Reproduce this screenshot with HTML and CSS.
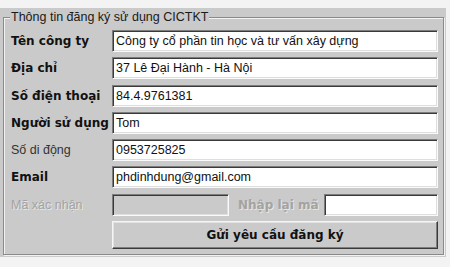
FILE: index.html
```html
<!DOCTYPE html>
<html lang="vi">
<head>
<meta charset="utf-8">
<title>Thông tin đăng ký sử dụng CICTKT</title>
<link rel="stylesheet" href="styles.css">
</head>
<body>
<div class="window">
  <div class="group">
    <div class="legend">Thông tin đăng ký sử dụng CICTKT</div>
    <div class="form">
      <div class="label bold">Tên công ty</div>
      <div class="field">Công ty cổ phần tin học và tư vấn xây dựng</div>

      <div class="label bold">Địa chỉ</div>
      <div class="field">37 Lê Đại Hành - Hà Nội</div>

      <div class="label bold">Số điện thoại</div>
      <div class="field">84.4.9761381</div>

      <div class="label bold">Người sử dụng</div>
      <div class="field">Tom</div>

      <div class="label normal">Số di động</div>
      <div class="field">0953725825</div>

      <div class="label bold">Email</div>
      <div class="field">phdinhdung@gmail.com</div>

      <div class="label disabled">Mã xác nhận</div>
      <div class="code-row">
        <div class="field field-disabled code-box"></div>
        <div class="label bold disabled retype">Nhập lại mã</div>
        <div class="field retype-box"></div>
      </div>

      <div></div>
      <div class="button">Gửi yêu cầu đăng ký</div>
    </div>
  </div>
</div>
</body>
</html>
```

FILE: styles.css
```css
html, body {
  margin: 0;
  padding: 0;
  background: #f3f3f3;
}

body {
  width: 450px;
  height: 267px;
  overflow: hidden;
  font-family: "Liberation Sans", Arial, sans-serif;
  font-size: 12.5px;
  color: #111;
}

.window {
  margin-top: 8px;
  width: 446px;
  height: 249px;
  background: #cacaca;
  padding-top: 9px;
  box-sizing: border-box;
}

.group {
  margin-left: 3px;
  width: 441px;
  height: 238px;
  box-sizing: border-box;
  border: 1px solid #8a8a8a;
  box-shadow: inset 1px 1px 0 #f2f2f2, 1px 1px 0 #f2f2f2;
  padding: 0 5px 0 7px;
}

.legend {
  margin-top: -8px;
  width: fit-content;
  padding: 0 1px;
  margin-left: -1px;
  background: #cacaca;
  line-height: 15px;
  color: #1a1a1a;
}

.form {
  margin-top: 5px;
  display: grid;
  grid-template-columns: 101px 326px;
  grid-template-rows: repeat(7, 22px) 28px;
  row-gap: 5.3px;
}

.label {
  display: flex;
  align-items: center;
  white-space: nowrap;
}

.bold {
  font-family: "DejaVu Sans", Verdana, sans-serif;
  font-weight: bold;
  font-size: 12px;
  color: #111;
}

.normal {
  color: #333;
}

.disabled {
  color: #a3a3a3;
  text-shadow: 1px 1px 0 #e6e6e6;
}

.field {
  box-sizing: border-box;
  height: 22px;
  background: #fff;
  border-top: 1px solid #7c7c7c;
  border-left: 1px solid #7c7c7c;
  border-right: 1px solid #fafafa;
  border-bottom: 1px solid #fafafa;
  box-shadow: inset 1px 1px 0 #3a3a3a, inset -1px -1px 0 #dedede;
  padding: 0 3px;
  display: flex;
  align-items: center;
  white-space: nowrap;
  overflow: hidden;
  color: #111;
}

.field-disabled {
  background: #cacaca;
}

.code-row {
  display: flex;
  align-items: center;
}

.code-box {
  width: 117px;
}

.retype {
  margin-left: 9px;
  width: 86px;
}

.retype-box {
  width: 114px;
}

.button {
  box-sizing: border-box;
  height: 28px;
  background: #cacaca;
  border-top: 1px solid #f5f5f5;
  border-left: 1px solid #f5f5f5;
  border-right: 1px solid #3a3a3a;
  border-bottom: 1px solid #3a3a3a;
  box-shadow: inset -1px -1px 0 #7e7e7e, inset 1px 1px 0 #e2e2e2;
  display: flex;
  align-items: center;
  justify-content: center;
  font-family: "DejaVu Sans", Verdana, sans-serif;
  font-weight: bold;
  font-size: 12px;
  color: #111;
}
```
